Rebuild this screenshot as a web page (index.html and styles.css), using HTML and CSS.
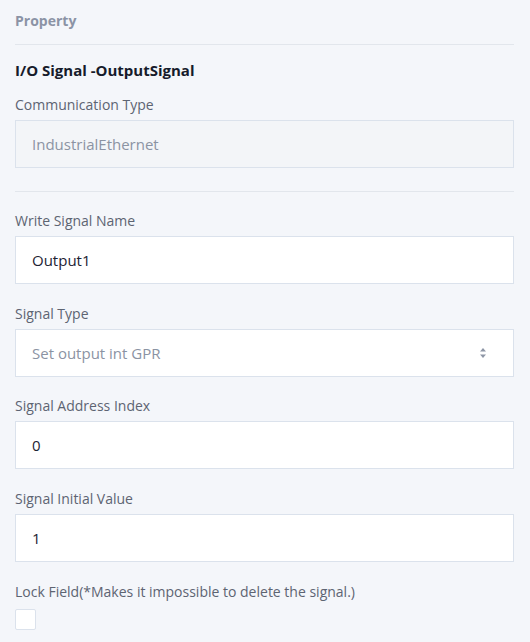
FILE: index.html
```html
<!DOCTYPE html>
<html lang="en">
<head>
<meta charset="utf-8">
<title>Property</title>
<link rel="stylesheet" href="styles.css">
</head>
<body>
<div class="panel">
  <div class="panel-head">Property</div>
  <div class="section top">
    <div class="title">I/O Signal -OutputSignal</div>
    <div class="field first">
      <div class="label">Communication Type</div>
      <div class="input disabled">IndustrialEthernet</div>
    </div>
  </div>
  <div class="section bottom">
    <div class="field first">
      <div class="label">Write Signal Name</div>
      <div class="input">Output1</div>
    </div>
    <div class="field">
      <div class="label">Signal Type</div>
      <div class="input select">
        <span class="placeholder">Set output int GPR</span>
        <svg class="arrows" width="8" height="12" viewBox="0 0 8 12"><path d="M4 1 L7 4.5 H1 Z" fill="#8e96a6"/><path d="M4 11 L7 7.5 H1 Z" fill="#8e96a6"/></svg>
      </div>
    </div>
    <div class="field">
      <div class="label">Signal Address Index</div>
      <div class="input">0</div>
    </div>
    <div class="field">
      <div class="label">Signal Initial Value</div>
      <div class="input">1</div>
    </div>
    <div class="field">
      <div class="label">Lock Field(*Makes it impossible to delete the signal.)</div>
      <div class="checkbox"></div>
    </div>
  </div>
</div>
</body>
</html>
```
FILE: styles.css
```css
* { box-sizing: border-box; }
html, body {
  margin: 0;
  padding: 0;
  background: #f4f6fa;
}
body {
  font-family: "Open Sans", Lato, sans-serif;
  font-size: 14px;
  color: #5d6472;
}
.panel {
  padding: 0 16px 0 15px;
  width: 530px;
  height: 642px;
}
.panel-head {
  height: 45px;
  padding-top: 11px;
  line-height: 20px;
  font-size: 14px;
  font-weight: 700;
  color: #8b93a5;
  border-bottom: 1px solid #e2e6ec;
}
.section.top {
  border-bottom: 1px solid #e2e6ec;
  padding-bottom: 23px;
}
.title {
  margin-top: 15px;
  line-height: 20px;
  font-size: 15px;
  font-weight: 700;
  color: #161b2b;
}
.field { margin-top: 19.67px; }
.top .field.first { margin-top: 15px; }
.bottom .field.first { margin-top: 19px; }
.label {
  line-height: 20px;
  margin-bottom: 5px;
}
.input {
  height: 48px;
  background: #fff;
  border: 1px solid #dbe2ec;
  padding: 0 16px;
  display: flex;
  align-items: center;
  font-size: 15px;
  color: #1d2333;
}
.input.disabled {
  background: #f3f5f8;
  color: #8b93a3;
}
.select { justify-content: space-between; padding-right: 26px; }
.placeholder { color: #8b93a3; }
.checkbox {
  margin-top: 7px;
  width: 21px;
  height: 21px;
  background: #fff;
  border: 1px solid #dbe2ec;
  border-radius: 2px;
}
```
